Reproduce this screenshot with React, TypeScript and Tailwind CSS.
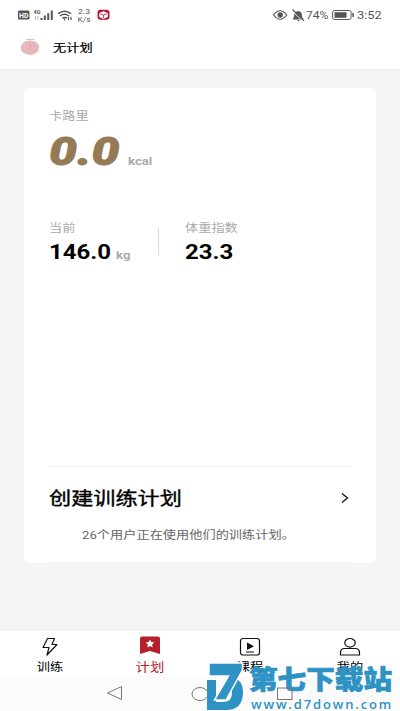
import type { ReactNode } from 'react';
import clsx from 'clsx';

const cjk = "font-['Roboto','Noto_Sans_CJK_SC',sans-serif]";

interface WideTextProps {
  className?: string;
  stretch?: string;
  children: ReactNode;
}

// Labels are drawn slightly wider than the font's natural proportions
function WideText({ className, stretch = 'scale-x-[1.2]', children }: WideTextProps) {
  return (
    <span className={clsx('block whitespace-nowrap', className)}>
      <span className={clsx('block w-max origin-left', stretch)}>{children}</span>
    </span>
  );
}

function StatusBar() {
  return (
    <div className="flex h-[30px] items-center justify-between pl-[17px] pr-[16px] text-[#555]">
      <svg width="95" height="18" viewBox="0 0 95 18" fill="none">
        <rect x="1" y="4.5" width="11.5" height="9" rx="1.2" fill="#555" />
        <text x="2" y="11.8" fontSize="7" fontWeight="700" fill="#fff" textLength="9.5" lengthAdjust="spacingAndGlyphs">HD</text>
        <text x="16.5" y="7.5" fontSize="5.5" fontWeight="700" fill="#555" textLength="7" lengthAdjust="spacingAndGlyphs">4G</text>
        <path d="M18.5 10v4M21 10v4" stroke="#bbb" strokeWidth="1" />
        <path d="M24.5 12v2M27.8 9.5V14M31.2 7.3V14M34.8 4.5V14" stroke="#555" strokeWidth="2" />
        <path d="M41 7.6q6.5-4.8 13 0M43 10q4.5-3.3 9 0M45.2 12.2q2.3-1.6 4.6 0" stroke="#555" strokeWidth="1.5" />
        <path d="M47.5 12.5v2M51.5 11v3M54 11v3" stroke="#555" strokeWidth="1.2" />
        <text x="61" y="7.5" fontSize="7.5" fill="#555" textLength="12" lengthAdjust="spacingAndGlyphs">2.3</text>
        <text x="60.5" y="16" fontSize="8" fill="#555" textLength="13" lengthAdjust="spacingAndGlyphs">K/s</text>
        <rect x="80.5" y="3.8" width="12" height="10" rx="3" fill="#b5142f" />
        <path d="m86.5 5.3 4.3 1.8v4l-4.3 1.800-4.300-1.800v-4z" fill="#fff" />
        <path d="m83 7.6 3.5 1.5 3.5-1.500M86.500 9v3.200" stroke="#b5142f" strokeWidth=".8" />
      </svg>
      <div className="flex items-center">
        <svg width="32" height="14" viewBox="0 0 32 14" fill="none">
          <path d="M.6 7q6.400-8.500 13.200 0Q7.200 15.500 .6 7Z" stroke="#555" strokeWidth="1.200" />
          <circle cx="7.200" cy="7" r="2.700" fill="#555" />
          <path d="M19.500 11.500c2-1.800 1.500-4.500 2.200-6.500.8-2.200 6-2.200 6.800 0 .6 2 0 4.700 2.200 6.500zM23.800 12.300h3l-1.500 1.200z" fill="#555" />
          <path d="m19 2.800 11.500 11" stroke="#fff" strokeWidth="1" />
          <path d="m19.500 1.500 11.500 11.300" stroke="#555" strokeWidth="1.100" />
        </svg>
        <WideText stretch="scale-x-[1.05]" className="ml-[1px] w-[26px] text-[11.5px] leading-[14px]">
          74%
        </WideText>
        <svg width="23" height="12" viewBox="0 0 23 12" fill="none">
          <rect x=".6" y="1.5" width="18.500" height="9" rx="2" stroke="#555" strokeWidth="1" />
          <rect x="2.500" y="3.200" width="12" height="5.600" fill="#555" />
          <path d="M21 4v4" stroke="#555" strokeWidth="1.500" />
        </svg>
        <WideText stretch="scale-x-[1.12]" className="ml-[2px] w-[27px] text-[11.5px] leading-[14px]">
          3:52
        </WideText>
      </div>
    </div>
  );
}

function Header() {
  return (
    <header className="flex h-[39px] items-center bg-white pl-5">
      <svg width="20" height="18" viewBox="0 0 20 18" fill="none" className="-mt-1.5">
        <path d="M6 1.500h8" stroke="#e8bcc0" />
        <ellipse cx="10" cy="9.700" rx="9.200" ry="7.300" fill="#e6b8bd" />
        <path d="M10.500 6.500v3.200L8 12" stroke="#dca0a8" />
      </svg>
      <WideText className="-mt-[1px] ml-[13px] text-[11px] leading-4 text-black [-webkit-text-stroke:0.2px]">
        无计划
      </WideText>
    </header>
  );
}

function PlanCard() {
  return (
    <section className="mx-6 flex h-[475px] flex-col rounded-[5px] bg-white px-[25px]">
      <WideText className="mt-[21px] text-[11px] leading-4 text-[#aaa]">卡路里</WideText>
      <div className="mt-[5px] flex h-[44px] items-baseline">
        <WideText
          stretch="scale-x-[1.31]"
          className="w-[79px] text-[38px] font-black italic leading-[44px] text-[#957a56] [-webkit-text-stroke:0.8px]"
        >
          0.0
        </WideText>
        <WideText className="text-[11px] font-bold text-[#aaa]">kcal</WideText>
      </div>

      <div className="mt-[45px] flex h-11">
        <div className="w-[109px]">
          <WideText className="mt-[2px] text-[11px] leading-4 text-[#aaa]">当前</WideText>
          <div className="mt-[3px] flex items-baseline">
            <WideText className="w-[67px] text-[20px] font-bold leading-6 text-black">146.0</WideText>
            <WideText className="text-[11px] font-bold text-[#aaa]">kg</WideText>
          </div>
        </div>
        <div className="mt-[9px] h-[27px] w-px bg-[#d9d9d9]" />
        <div className="ml-[26px]">
          <WideText className="mt-[2px] text-[11px] leading-4 text-[#aaa]">体重指数</WideText>
          <WideText className="mt-[3px] text-[20px] font-bold leading-6 text-black">23.3</WideText>
        </div>
      </div>

      <div className="mt-auto h-[97px] border-y border-[#f1f1f1]">
        <div className="mt-[20px] flex h-6 items-center justify-between">
          <WideText
            stretch="scale-x-[1.23]"
            className="text-[18px] leading-6 text-black [-webkit-text-stroke:0.35px]"
          >
            创建训练计划
          </WideText>
          <svg width="10" height="12" viewBox="0 0 10 12" fill="none" className="-mt-[3px] mr-[1px]">
            <path d="m2 1.500 5.500 4.500L2 10.500" stroke="#111" strokeWidth="1.300" />
          </svg>
        </div>
        <WideText className="ml-[33px] mt-[17px] text-[11px] leading-4 text-[#666]">
          26个用户正在使用他们的训练计划。
        </WideText>
      </div>
    </section>
  );
}

interface TabProps {
  label: string;
  active?: boolean;
  children: ReactNode;
}

function Tab({ label, active, children }: TabProps) {
  return (
    <div className={clsx('flex flex-col items-center pt-[5px]', active ? 'text-[#b5202a]' : 'text-black')}>
      <svg width="22" height="20" viewBox="0 0 22 20" fill="none">
        {children}
      </svg>
      <span
        className={clsx(
          'mt-[4px] block origin-center scale-x-[1.2] leading-4',
          active ? 'text-[12px]' : 'text-[11px]'
        )}
      >
        {label}
      </span>
    </div>
  );
}

function TabBar() {
  return (
    <nav className="grid h-[45px] grid-cols-4 bg-white">
      <Tab label="训练">
        <path d="M8.500 2.500h7l-2.500 6h5L8 19l2-7.500H4z" stroke="#111" strokeWidth="1.200" strokeLinejoin="round" />
      </Tab>
      <Tab label="计划" active>
        <path d="M3 .5h16q2 0 2 2V18l-10-3-10 3V2.500q0-2 2-2z" fill="#b5202a" />
        <path d="m11 3.500 1.300 2.600 3 .4-2.200 2 .6 2.900-2.700-1.400-2.700 1.400.6-2.900-2.200-2 3-.4z" fill="#fff" />
      </Tab>
      <Tab label="课程">
        <rect x="1.500" y="2.500" width="19" height="16.500" rx="2.500" stroke="#111" strokeWidth="1.200" />
        <path d="m8 6.500 7 3.700-7 3.700z" fill="#111" />
        <path d="M7 16h8" stroke="#111" />
      </Tab>
      <Tab label="我的">
        <ellipse cx="11" cy="6.800" rx="5.200" ry="4.300" stroke="#111" strokeWidth="1.200" />
        <path d="M1.500 19v-2.500q0-4 4-4h11q4 0 4 4V19z" stroke="#111" strokeWidth="1.200" strokeLinejoin="round" />
      </Tab>
    </nav>
  );
}

function SystemBar() {
  return (
    <div className="grid h-[35px] grid-cols-[72px_100px_70px] justify-center bg-[#fbfbfb]">
      <svg width="18" height="16" viewBox="0 0 18 16" fill="none" className="ml-[27px] mt-[9px]">
        <path d="M15.500 1.500v13L1.500 8z" stroke="#777" strokeLinejoin="round" />
      </svg>
      <svg width="18" height="16" viewBox="0 0 18 16" fill="none" className="ml-[40px] mt-[10px]">
        <ellipse cx="9" cy="8" rx="8" ry="6.500" stroke="#777" />
      </svg>
    </div>
  );
}

function Watermark() {
  return (
    <div className="absolute left-[205px] top-[661px] h-[50px] w-[195px] text-[#2f92c4]">
      <svg width="40" height="50" viewBox="0 0 40 50" className="absolute left-0 top-0">
        <path d="M2 19h9v22h7q9 0 9-9 0-5-3-7l5-9q9 4 9 15 0 18-17 18H2z" fill="#2f92c4" />
        <path d="M4 2h33.500v7L21 39H9.500l14-24H4z" fill="#2f92c4" stroke="#fff" strokeWidth="1.500" />
      </svg>
      <span className="absolute left-[44px] top-[3px] block origin-left scale-x-[1.1] whitespace-nowrap text-[26px] font-black leading-[33px] [-webkit-text-stroke:0.7px]">
        第七下载站
      </span>
      <span className="absolute left-[46px] top-[36px] block whitespace-nowrap font-['Open_Sans',sans-serif] text-[13px] font-semibold leading-[14px] tracking-[1.85px]">
        www.d7down.com
      </span>
      {/* recents button of the system bar shows over the lettering */}
      <svg width="18" height="16" viewBox="0 0 18 16" fill="none" className="absolute left-[71px] top-[25px]">
        <rect x="1.500" y="2" width="14.500" height="11.500" stroke="#777" />
      </svg>
    </div>
  );
}

export default function App() {
  return (
    <div className={clsx('relative flex h-[711px] w-[400px] flex-col overflow-hidden bg-white', cjk)}>
      <StatusBar />
      <Header />
      <main className="h-[562px] border-t border-[#f0f0f0] bg-[#f5f5f5] pt-[18px]">
        <PlanCard />
      </main>
      <TabBar />
      <SystemBar />
      <Watermark />
    </div>
  );
}
